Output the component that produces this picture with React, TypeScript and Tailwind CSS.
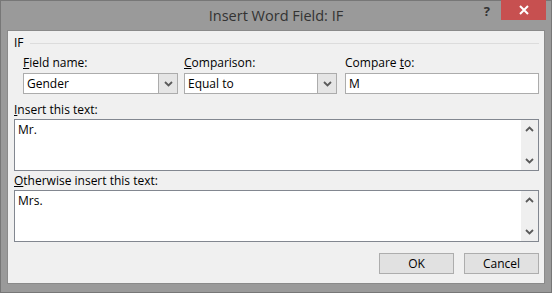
import React from "react";

const font = { fontFamily: '"Open Sans", "Noto Sans", sans-serif' };

function Chevron({ up, className }: { up?: boolean; className?: string }) {
  return (
    <svg width="9" height="6" viewBox="0 0 9 6" className={className}>
      <path
        d={up ? "M1 5 L4.5 1.5 L8 5" : "M1 1 L4.5 4.5 L8 1"}
        fill="none"
        stroke="#5a5a5a"
        strokeWidth="1.8"
      />
    </svg>
  );
}

function Combo({ value, width }: { value: string; width: string }) {
  return (
    <div className={`${width} h-[21px] flex border border-[#acacac] bg-white`}>
      <span className="flex-1 pl-[3px] leading-[19px]">{value}</span>
      <div className="w-[19px] flex items-center justify-center bg-[#e5e5e5] border-l border-[#acacac]">
        <Chevron />
      </div>
    </div>
  );
}

function TextBox({ value }: { value: string }) {
  return (
    <div className="h-[52px] flex border border-[#828790] bg-white">
      <span className="flex-1 pl-[3px] pt-[2px] leading-[16px]">{value}</span>
      <div className="w-[17px] flex flex-col items-center justify-between py-[6px] bg-[#efefef]">
        <Chevron up />
        <Chevron />
      </div>
    </div>
  );
}

export default function App() {
  return (
    <div
      className="w-[552px] h-[293px] flex flex-col bg-[#9a9a9a] border border-[#777] text-[12px] text-black"
      style={font}
    >
      <div className="relative h-[29px] flex items-center justify-center">
        <span className="text-[14.5px] text-[#333] pt-[1px]">Insert Word Field: IF</span>
        <span className="absolute right-[61px] top-[1px] text-[13px] font-bold text-[#333]">?</span>
        <div className="absolute right-[5px] top-[-1px] w-[45px] h-[20px] bg-[#c75050] flex items-center justify-center">
          <svg width="10" height="10" viewBox="0 0 10 10">
            <path d="M1 1 L9 9 M9 1 L1 9" stroke="#fff" strokeWidth="2" />
          </svg>
        </div>
      </div>

      <div className="mx-[6px] h-[254px] border border-[#8a8a8a] bg-[#f0f0f0] pl-[6px] pr-[5px] pt-[4px] leading-[16px]">
        <div className="flex items-center gap-[6px]">
          <span>IF</span>
          <div className="flex-1 h-px bg-[#dcdcdc]" />
        </div>

        <div className="flex mt-[4px] ml-[9px]">
          <div className="w-[161px]">
            <div>
              <u>F</u>ield name:
            </div>
            <div className="mt-[2px]">
              <Combo value="Gender" width="w-[155px]" />
            </div>
          </div>
          <div className="w-[161px]">
            <div>
              <u>C</u>omparison:
            </div>
            <div className="mt-[2px]">
              <Combo value="Equal to" width="w-[153px]" />
            </div>
          </div>
          <div className="flex-1">
            <div>
              Compare <u>t</u>o:
            </div>
            <div className="mt-[2px] h-[21px] border border-[#acacac] bg-white pl-[3px] leading-[19px]">
              M
            </div>
          </div>
        </div>

        <div className="mt-[8px]">
          <u>I</u>nsert this text:
        </div>
        <div className="mt-[1px]">
          <TextBox value="Mr." />
        </div>

        <div className="mt-[2px]">
          <u>O</u>therwise insert this text:
        </div>
        <div className="mt-[1px]">
          <TextBox value="Mrs." />
        </div>

        <div className="flex justify-end gap-[10px] mt-[11px]">
          <button className="w-[75px] h-[21px] border border-[#adadad] bg-[#e1e1e1] leading-[19px]">OK</button>
          <button className="w-[75px] h-[21px] border border-[#adadad] bg-[#e1e1e1] leading-[19px]">Cancel</button>
        </div>
      </div>
    </div>
  );
}
